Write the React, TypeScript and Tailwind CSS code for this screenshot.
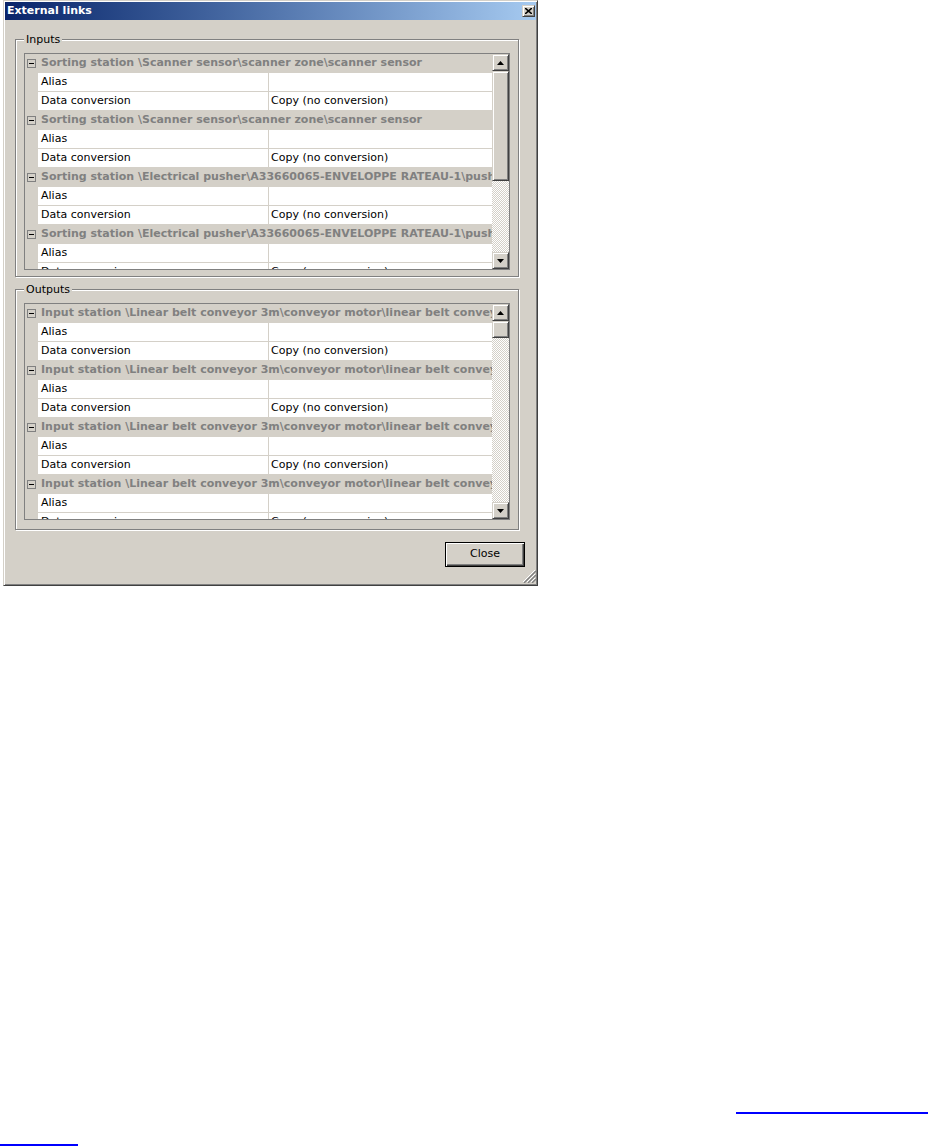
import React from "react";

const inputs = [
  "Sorting station \\Scanner sensor\\scanner zone\\scanner sensor",
  "Sorting station \\Scanner sensor\\scanner zone\\scanner sensor",
  "Sorting station \\Electrical pusher\\A33660065-ENVELOPPE RATEAU-1\\pusher",
  "Sorting station \\Electrical pusher\\A33660065-ENVELOPPE RATEAU-1\\pusher",
];

const outputs = [
  "Input station \\Linear belt conveyor 3m\\conveyor motor\\linear belt conveyor",
  "Input station \\Linear belt conveyor 3m\\conveyor motor\\linear belt conveyor",
  "Input station \\Linear belt conveyor 3m\\conveyor motor\\linear belt conveyor",
  "Input station \\Linear belt conveyor 3m\\conveyor motor\\linear belt conveyor",
];

const raised =
  "border border-t-[#d4d0c8] border-l-[#d4d0c8] border-r-[#404040] border-b-[#404040] shadow-[inset_1px_1px_0_#ffffff,inset_-1px_-1px_0_#808080] bg-[#d4d0c8]";

function Header({ text }: { text: string }) {
  return (
    <div className="flex h-[19px] items-center overflow-hidden bg-[#d4d0c8]">
      <span className="ml-[2px] flex h-[9px] w-[9px] shrink-0 items-center justify-center border border-[#808080]">
        <span className="h-px w-[5px] bg-black" />
      </span>
      <span className="ml-[5px] whitespace-nowrap font-bold text-[#808080]">{text}</span>
    </div>
  );
}

function Prop({ name, value }: { name: string; value: string }) {
  return (
    <div className="flex h-[19px]">
      <div className="w-[13px] shrink-0 bg-[#d4d0c8]" />
      <div className="flex min-w-0 flex-1 border-b border-[#d4d0c8] bg-white">
        <div className="w-[231px] shrink-0 border-r border-[#d4d0c8] pl-[3px] leading-[18px] whitespace-nowrap">{name}</div>
        <div className="min-w-0 flex-1 pl-[2px] leading-[18px] whitespace-nowrap">{value}</div>
      </div>
    </div>
  );
}

function Arrow({ down }: { down?: boolean }) {
  return (
    <svg width="7" height="4" viewBox="0 0 7 4" className={down ? "rotate-180" : ""}>
      <path d="M3.5 0 L7 4 L0 4 Z" fill="#000" />
    </svg>
  );
}

function Grid({ items, thumb }: { items: string[]; thumb: string }) {
  return (
    <div className="flex h-[217px] w-[486px] border border-[#808080] bg-[#d4d0c8]">
      <div className="min-w-0 flex-1 overflow-hidden">
        {items.map((t, i) => (
          <div key={i}>
            <Header text={t} />
            <Prop name="Alias" value="" />
            <Prop name="Data conversion" value="Copy (no conversion)" />
          </div>
        ))}
      </div>
      <div className="flex w-[17px] shrink-0 flex-col">
        <div className={`flex h-[17px] items-center justify-center ${raised}`}>
          <Arrow />
        </div>
        <div className={`${thumb} shrink-0 ${raised}`} />
        <div className="flex-1 bg-[image:repeating-conic-gradient(#ffffff_0%_25%,#d4d0c8_0%_50%)] bg-[length:2px_2px]" />
        <div className={`flex h-[17px] items-center justify-center ${raised}`}>
          <Arrow down />
        </div>
      </div>
    </div>
  );
}

function Group({ label, children, pb }: { label: string; children: React.ReactNode; pb: string }) {
  return (
    <fieldset
      className={`ml-[10px] w-[504px] min-w-0 border border-[#808080] px-[8px] pt-[7px] ${pb} shadow-[inset_1px_1px_0_#ffffff,1px_1px_0_#ffffff]`}
    >
      <legend className="bg-[#d4d0c8] px-[2px] leading-[13px]">{label}</legend>
      {children}
    </fieldset>
  );
}

export default function App() {
  return (
    <div className="h-[1146px] w-full overflow-hidden bg-white font-['DejaVu_Sans',sans-serif] text-[11px] text-black">
      <div className="ml-[3px] flex h-[586px] w-[535px] flex-col border border-t-[#d4d0c8] border-l-[#d4d0c8] border-r-[#404040] border-b-[#404040] bg-[#d4d0c8] p-px shadow-[inset_1px_1px_0_#ffffff,inset_-1px_-1px_0_#808080]">
        {/* title bar */}
        <div className="flex h-[18px] shrink-0 items-center justify-between bg-linear-to-r from-[#0a246a] to-[#a6caf0] pl-[2px] pr-[1px]">
          <span className="font-bold text-white">External links</span>
          <button className={`flex h-[12px] w-[13px] items-center justify-center ${raised}`}>
            <svg width="7" height="6" viewBox="0 0 7 6">
              <path d="M0 0 L7 6 M7 0 L0 6" stroke="#000" strokeWidth="1.6" />
            </svg>
          </button>
        </div>

        <div className="mt-[13px]">
          <Group label="Inputs" pb="pb-[6px]">
            <Grid items={inputs} thumb="h-[110px]" />
          </Group>
        </div>
        <div className="mt-[6px]">
          <Group label="Outputs" pb="pb-[9px]">
            <Grid items={outputs} thumb="h-[17px]" />
          </Group>
        </div>

        <div className="mt-[12px] flex justify-end pr-[11px]">
          <button className="h-[25px] w-[80px] border border-black bg-[#d4d0c8] shadow-[inset_1px_1px_0_#ffffff,inset_-1px_-1px_0_#404040,inset_-2px_-2px_0_#808080]">
            Close
          </button>
        </div>
        <div className="mt-[2px] flex justify-end">
          <svg width="14" height="14" viewBox="0 0 14 14">
            <path d="M13 1 L1 13 M13 5 L5 13 M13 9 L9 13" stroke="#ffffff" strokeWidth="1" />
            <path d="M14 2 L2 14 M14 6 L6 14 M14 10 L10 14" stroke="#808080" strokeWidth="1.4" />
          </svg>
        </div>
      </div>

      {/* wrapped link underline */}
      <div className="mt-[526px] flex justify-end">
        <a className="block h-[2px] w-[192px] bg-[#0000ff]" href="#" aria-label="link" />
      </div>
      <div className="mt-[30px]">
        <a className="block h-[2px] w-[78px] bg-[#0000ff]" href="#" aria-label="link" />
      </div>
    </div>
  );
}
